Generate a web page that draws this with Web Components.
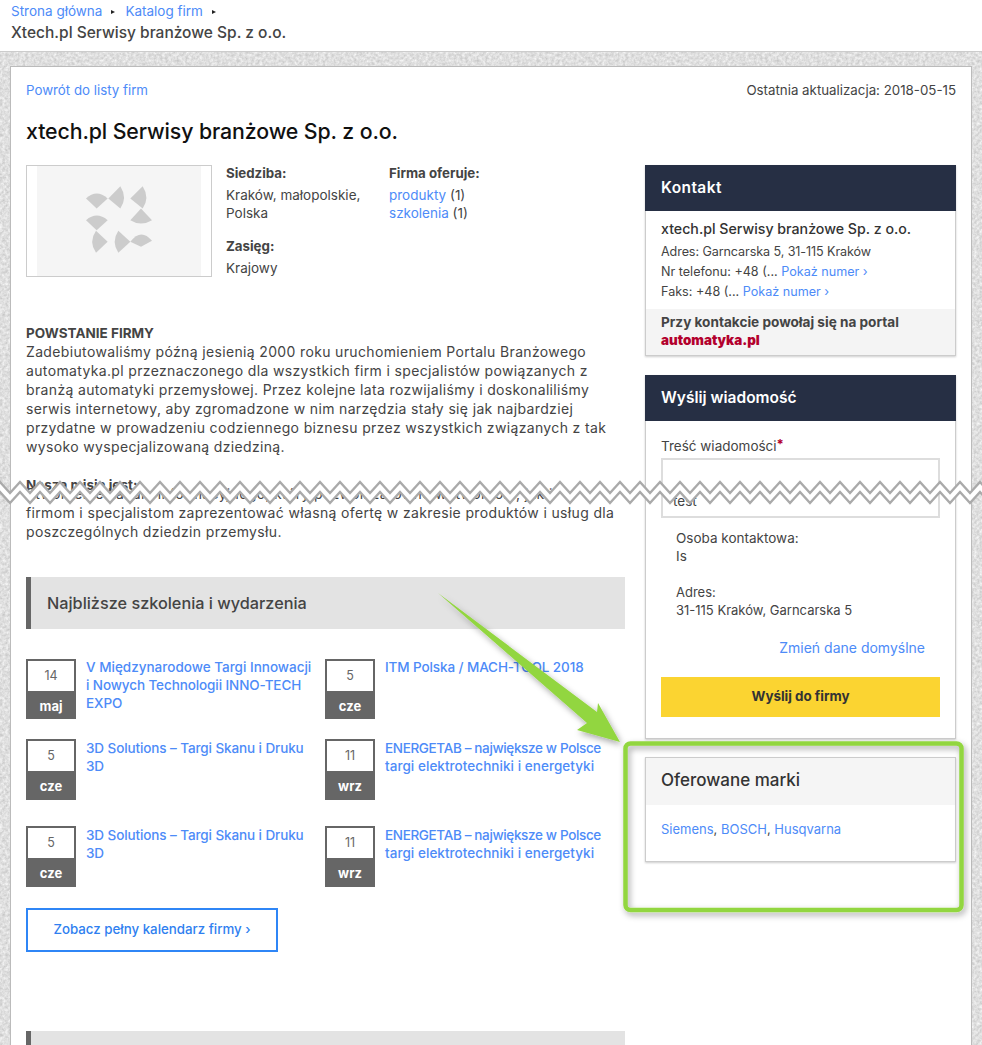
<!DOCTYPE html>
<html lang="pl"><head><meta charset="utf-8"><title>xtech.pl</title>
<style>
html,body{margin:0;padding:0;height:1045px;overflow:hidden;background:#fff}
body{font-family:Inter,"Liberation Sans",sans-serif;font-size:13px;color:#444;position:relative}
</style></head><body>
<app-page></app-page>
<script>
function def(name,css,html){
  customElements.define(name,class extends HTMLElement{
    constructor(){super();const r=this.attachShadow({mode:'open'});
      const h=typeof html==='function'?html(this):html;
      r.innerHTML='<style>'+css+'</style>'+h;}
  });
}
const A='a{color:#4d8bf8;text-decoration:none}';
def('site-header',`:host{display:block;height:52px;box-sizing:border-box;padding:3px 11px 0;background:#fff;border-bottom:1px solid #ccc}${A}
.c{height:17px;line-height:17px;font-size:13.5px;display:flex;align-items:center}
.c i{display:block;width:0;height:0;border-left:4px solid #222;border-top:2.5px solid transparent;border-bottom:2.5px solid transparent;margin:0 10px 0 9px}
.t{margin-top:3px;line-height:20px;font-size:15.5px;font-weight:500;color:#444}`,
`<div class="c"><a href="#">Strona główna</a><i></i><a href="#">Katalog firm</a><i></i></div><div class="t">Xtech.pl Serwisy branżowe Sp. z o.o.</div>`);

def('company-logo',`:host{display:flex;width:186px;height:112px;box-sizing:border-box;border:1px solid #ccc;padding:0 10px;flex:none}
div{flex:1;background:#f5f5f5;display:flex;align-items:center;justify-content:center}svg{display:block;margin-top:-4px}`,
`<div><svg width="66" height="67" viewBox="255 558 198 200" fill="#ccc"><path d="M255 595Q287 565 320 595L287 625Z"/><path d="M322 595L358 558Q380 592 358 625Z"/><path d="M388 595L425 558Q447 592 425 625Z"/><path d="M388 660L420 625L453 660Q420 680 388 660Z"/><path d="M255 660Q287 632 320 660L287 690Z"/><path d="M320 725L285 692Q262 725 285 758Z"/><path d="M388 725L352 692Q330 725 352 758Z"/><path d="M388 725Q420 682 453 722L420 740Z"/></svg></div>`);

def('section-heading',`:host{display:block;height:52px;line-height:52px;background:#e3e3e3;border-left:5px solid #666;padding-left:16px;font-size:16.25px;font-weight:450;color:#444}`,`<slot></slot>`);

def('date-badge',`:host{display:flex;flex-direction:column;width:50px;height:100%;box-sizing:border-box;border:2px solid #666;flex:none;text-align:center}
.d{flex:1;background:#fff;font-size:12.5px;color:#666;line-height:30px}
.m{height:28px;line-height:31px;background:#666;color:#fff;font-size:13px;font-weight:700}`,
h=>`<div class="d">${h.getAttribute('day')}</div><div class="m">${h.getAttribute('month')}</div>`);

def('event-item',`:host{display:flex;gap:10px;align-items:stretch;min-width:0}${A}
a{display:block;font-size:13.5px;line-height:18px;font-weight:500;white-space:nowrap;letter-spacing:-.1px;margin-top:-1px}
:host([lower]) a{margin-top:0}`,
h=>`<date-badge day="${h.getAttribute('day')}" month="${h.getAttribute('month')}"></date-badge><a href="#"><slot></slot></a>`);

def('panel-card',`:host{display:block;border:1px solid #ccc;box-shadow:0 1px 2px rgba(0,0,0,.2);background:#fff;box-sizing:border-box}
.h{background:#262f44;color:#fff;font-weight:600;font-size:15.5px;height:46px;line-height:45px;padding-left:16px;margin:-1px -1px 0}
:host([wide]) .h{letter-spacing:.4px}
:host([light]) .h{background:#f5f5f5;color:#333;font-weight:450;font-size:17px;height:47px;line-height:44px;margin:0;padding-left:15px}`,
h=>`<div class="h">${h.getAttribute('title')}</div><slot></slot>`);

def('contact-card',`:host{display:block}${A}
.b{padding:7px 15px 7px;font-size:12.6px;line-height:20px;white-space:nowrap}
.n{font-size:14.2px;font-weight:500;color:#333;line-height:22px;margin-bottom:2px}
.s{background:#f4f4f4;height:46px;padding:4px 15px 0;box-sizing:border-box;font-weight:700;line-height:18px;font-size:13.6px;color:#444}
.s b{color:#b3002d;font-size:13.4px}`,
`<panel-card wide title="Kontakt"><div class="b"><div class="n">xtech.pl Serwisy branżowe Sp. z o.o.</div>
<div style="letter-spacing:-.1px">Adres: Garncarska 5, 31-115 Kraków</div><div>Nr telefonu: +48 (... <a href="#">Pokaż numer ›</a></div><div>Faks: +48 (... <a href="#">Pokaż numer ›</a></div></div>
<div class="s">Przy kontakcie powołaj się na portal<br><b>automatyka.pl</b></div></panel-card>`);

def('message-card',`:host{display:block}${A}
.b{padding:16px 15px 0;height:317px;box-sizing:border-box;font-size:13.5px;line-height:18px}
sup{color:#b3002d;font-size:13px;line-height:0;font-weight:700;vertical-align:2px}
.ta{height:60px;box-sizing:border-box;border:2px solid #ddd;margin:3px 0 11px;padding:32px 10px 0;color:#444}
.i{padding-left:15px;margin-bottom:18px}
.a{font-size:13px}
.r{text-align:right;padding-right:15px;margin-top:20px;font-size:14px}
.btn{height:40px;line-height:39px;text-align:center;background:#fbd431;color:#333;font-weight:700;font-size:13.4px;margin-top:20px}`,
`<panel-card title="Wyślij wiadomość"><div class="b"><div>Treść wiadomości<sup>*</sup></div><div class="ta">test</div>
<div class="i">Osoba kontaktowa:<br>Is</div><div class="i a">Adres:<br>31-115 Kraków, Garncarska 5</div>
<div class="r"><a href="#">Zmień dane domyślne</a></div><div class="btn">Wyślij do firmy</div></div></panel-card>`);

def('brands-card',`:host{display:block}${A}
.b{height:56px;box-sizing:border-box;padding:14px 15px 0;font-size:13px;line-height:20px}`,
`<panel-card light title="Oferowane marki"><div class="b"><a href="#">Siemens</a>, <a href="#">BOSCH</a>, <a href="#">Husqvarna</a></div></panel-card>`);

def('tear-mark',`:host{display:block;position:absolute;left:0;top:476px;width:982px;height:34px;pointer-events:none}svg{display:block}`,
()=>{let u=[],l=[];for(let x=-20;x<=1000;x+=10){const up=((x/10)%2===0);u.push(x+','+(up?6:17));l.push(x+','+(up?16:27));}
const back=l.slice().reverse().join(' ');
return `<svg width="982" height="34"><polygon points="${u.join(' ')} ${back}" fill="#fff"/><polyline points="${u.join(' ')}" fill="none" stroke="#aaa" stroke-width="2.4"/><polyline points="${l.join(' ')}" fill="none" stroke="#aaa" stroke-width="2.4"/></svg>`});

def('callout-arrow',`:host{display:block;position:absolute;left:0;top:0;pointer-events:none;width:982px;height:1045px}
svg{display:block;overflow:visible}`,
`<svg width="982" height="1045"><defs><filter id="s" x="-20%" y="-20%" width="140%" height="140%"><feDropShadow dx="2" dy="3" stdDeviation="3" flood-color="#000" flood-opacity=".35"/></filter></defs>
<polygon filter="url(#s)" points="438,593 597,712 598,703 620,742 577,730 587,723" fill="#92d63f"/>
<rect filter="url(#s)" x="625.5" y="743.5" width="336" height="166.5" rx="5" fill="none" stroke="#92d63f" stroke-width="4.5"/></svg>`);

def('app-page',`:host{display:block;height:1045px;overflow:hidden;position:relative;
background-color:#dfdfdf;background-image:url("data:image/svg+xml,%3Csvg xmlns='http://www.w3.org/2000/svg' width='300' height='300'%3E%3Cfilter id='n' color-interpolation-filters='sRGB' x='0' y='0' width='100%25' height='100%25'%3E%3CfeTurbulence type='fractalNoise' baseFrequency='.35' numOctaves='3' stitchTiles='stitch'/%3E%3CfeColorMatrix values='.25 0 0 0 .75 .25 0 0 0 .75 .25 0 0 0 .75 0 0 0 0 1'/%3E%3C/filter%3E%3Crect width='300' height='300' filter='url(%23n)'/%3E%3C/svg%3E")}
${A}
main{margin:14px 10px 0 10px;height:1100px;box-sizing:border-box;background:#fff;border:1px solid #bbb;padding:14px 15px 0}
.top{display:flex;justify-content:space-between;height:18px;line-height:18px;font-size:13.3px}
h1{margin:18px 0 0;font-size:21.3px;font-weight:500;color:#111;line-height:28px;letter-spacing:-.1px}
.cols{display:flex;gap:20px;margin-top:20px}
.l{width:599px;flex:none}.r{width:311px;flex:none;display:flex;flex-direction:column}
.info{display:flex;height:112px}
.i1{width:149px;margin-left:14px}.i2{margin-left:14px}
.info b{display:block;line-height:16px;margin-bottom:5px;color:#444;font-size:13.3px}
.info p{margin:0 0 16px;line-height:18px;font-size:13.5px;white-space:nowrap}
.txt{margin:46px 0 0;font-size:14px;letter-spacing:.35px;line-height:19px;color:#444;white-space:nowrap}
.txt b{font-weight:700;font-size:13.5px;letter-spacing:0;line-height:0}
.pad{margin-top:-10px;display:block;height:19px;overflow:hidden}
section-heading.a{margin-top:36px}
.ev{display:grid;grid-template-columns:299px 300px;grid-template-rows:60px 61px 67px;row-gap:20px;margin-top:30px}
.ev event-item:nth-child(n+5){margin-top:6px}
.more{display:block;width:252px;height:44px;line-height:39px;box-sizing:border-box;border:2px solid #2f86f6;color:#2f7ff0;text-align:center;font-weight:500;font-size:13.3px;margin-top:21px}
section-heading.b{margin-top:79px}
message-card{margin-top:19px}brands-card{margin-top:18px}`,
`<site-header></site-header>
<main><div class="top"><a href="#">Powrót do listy firm</a><span>Ostatnia aktualizacja: 2018-05-15</span></div>
<h1>xtech.pl Serwisy branżowe Sp. z o.o.</h1>
<div class="cols"><div class="l">
<div class="info"><company-logo></company-logo>
<div class="i1"><b>Siedziba:</b><p>Kraków, małopolskie,<br>Polska</p><b>Zasięg:</b><p>Krajowy</p></div>
<div class="i2"><b>Firma oferuje:</b><p><a href="#">produkty</a> (1)<br><a href="#">szkolenia</a> (1)</p></div></div>
<div class="txt"><b>POWSTANIE FIRMY</b><br>Zadebiutowaliśmy późną jesienią 2000 roku uruchomieniem Portalu Branżowego<br>automatyka.pl przeznaczonego dla wszystkich firm i specjalistów powiązanych z<br>branżą automatyki przemysłowej. Przez kolejne lata rozwijaliśmy i doskonaliliśmy<br>serwis internetowy, aby zgromadzone w nim narzędzia stały się jak najbardziej<br>przydatne w prowadzeniu codziennego biznesu przez wszystkich związanych z tak<br>wysoko wyspecjalizowaną dziedziną.<br><br><b>Nasza misja jest:</b><br><span class="pad">Stworzenie kanału informacyjnego, który pozwoli zarówno wytwórcom, jak i</span>firmom i specjalistom zaprezentować własną ofertę w zakresie produktów i usług dla<br>poszczególnych dziedzin przemysłu.</div>
<section-heading class="a">Najbliższe szkolenia i wydarzenia</section-heading>
<div class="ev">
<event-item day="14" month="maj"><span style="letter-spacing:0">V Międzynarodowe Targi Innowacji</span><br>i Nowych Technologii INNO-TECH<br>EXPO</event-item>
<event-item day="5" month="cze">ITM Polska / MACH-TOOL 2018</event-item>
<event-item lower day="5" month="cze">3D Solutions – Targi Skanu i Druku<br>3D</event-item>
<event-item lower day="11" month="wrz"><span style="letter-spacing:-.35px">ENERGETAB – największe w Polsce</span><br><span style="letter-spacing:.05px">targi elektrotechniki i energetyki</span></event-item>
<event-item lower day="5" month="cze">3D Solutions – Targi Skanu i Druku<br>3D</event-item>
<event-item lower day="11" month="wrz"><span style="letter-spacing:-.35px">ENERGETAB – największe w Polsce</span><br><span style="letter-spacing:.05px">targi elektrotechniki i energetyki</span></event-item>
</div>
<a class="more" href="#">Zobacz pełny kalendarz firmy ›</a>
<section-heading class="b"></section-heading>
</div>
<div class="r"><contact-card></contact-card><message-card></message-card><brands-card></brands-card></div>
</div></main>
<tear-mark></tear-mark><callout-arrow></callout-arrow>`);
</script>
</body></html>
